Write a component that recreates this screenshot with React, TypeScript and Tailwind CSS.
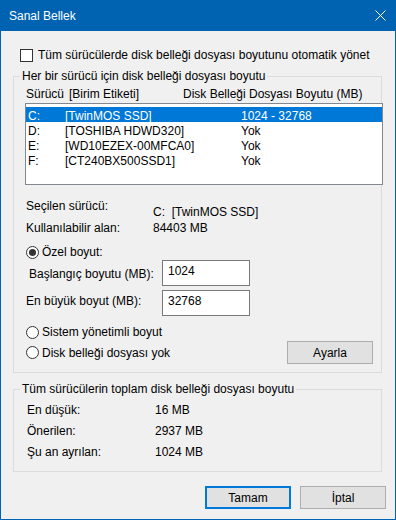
import React from "react";

const font = { fontFamily: '"Liberation Sans", Arial, sans-serif' };

const drives = [
  { d: "C:", label: "[TwinMOS SSD]", size: "1024 - 32768", sel: true },
  { d: "D:", label: "[TOSHIBA HDWD320]", size: "Yok" },
  { d: "E:", label: "[WD10EZEX-00MFCA0]", size: "Yok" },
  { d: "F:", label: "[CT240BX500SSD1]", size: "Yok" },
];

function Radio({ checked, label }: { checked?: boolean; label: string }) {
  return (
    <div className="flex items-center h-[16px] ml-[1px]">
      <span className="w-[13px] h-[13px] rounded-full border border-[#333333] bg-white flex items-center justify-center">
        {checked && <span className="w-[7px] h-[7px] rounded-full bg-[#333333]" />}
      </span>
      <span className="ml-[3px] leading-[16px]">{label}</span>
    </div>
  );
}

function Btn({ children, primary }: { children: React.ReactNode; primary?: boolean }) {
  return (
    <button
      className={
        primary
          ? "w-[86px] h-[23px] bg-[#e1e1e1] border-2 border-[#0078d7] text-[12px] leading-[16px] text-black"
          : "w-[86px] h-[23px] bg-[#e1e1e1] border border-[#adadad] text-[12px] leading-[16px] text-black"
      }
    >
      {children}
    </button>
  );
}

export default function App() {
  return (
    <div
      className="w-[396px] h-[520px] bg-[#0063b1] px-[1px] pb-[1px] flex flex-col text-[12px] text-black"
      style={font}
    >
      {/* Title bar */}
      <div className="h-[31px] flex items-center justify-between text-white">
        <span className="pl-[8px] leading-[16px]">Sanal Bellek</span>
        <svg width="11" height="11" viewBox="0 0 11 11" className="mr-[9px]">
          <path d="M0.5 0.5 L10.5 10.5 M10.5 0.5 L0.5 10.5" stroke="white" strokeWidth="1" />
        </svg>
      </div>

      {/* Body */}
      <div className="flex-1 bg-[#f0f0f0] pt-[16px] flex flex-col">
        <div className="flex items-center h-[16px] ml-[19px]">
          <span className="w-[13px] h-[13px] border border-[#333333] bg-white" />
          <span className="ml-[5px] leading-[16px]">
            Tüm sürücülerde disk belleği dosyası boyutunu otomatik yönet
          </span>
        </div>

        <fieldset className="mt-[5px] ml-[12px] w-[369px] min-w-0 border border-[#dcdcdc] pb-[8px]">
          <legend className="ml-[6px] px-[2px] h-[16px] leading-[16px]">
            Her bir sürücü için disk belleği dosyası boyutu
          </legend>
          <div className="pl-[11px] pt-[2px]">
            <div className="flex h-[16px] leading-[16px] pl-[1px]">
              <span className="w-[43px]">Sürücü</span>
              <span className="w-[114px]">[Birim Etiketi]</span>
              <span>Disk Belleği Dosyası Boyutu (MB)</span>
            </div>
            <div className="mt-[1px] w-[358px] h-[82px] border border-[#828790] bg-white pt-[3px]">
              {drives.map((r) => (
                <div
                  key={r.d}
                  className={
                    r.sel
                      ? "flex h-[15px] leading-[18px] pl-[2px] bg-[#0078d7] text-white"
                      : "flex h-[15px] leading-[18px] pl-[2px]"
                  }
                >
                  <span className="w-[37px]">{r.d}</span>
                  <span className="w-[176px]">{r.label}</span>
                  <span>{r.size}</span>
                </div>
              ))}
            </div>

            <div className="mt-[13px] pl-[1px] flex">
              <span className="w-[127px] leading-[16px]">Seçilen sürücü:</span>
              <span className="mt-[6px] leading-[16px] whitespace-pre">C:  [TwinMOS SSD]</span>
            </div>
            <div className="pl-[1px] flex">
              <span className="w-[127px] leading-[16px]">Kullanılabilir alan:</span>
              <span className="leading-[16px]">84403 MB</span>
            </div>

            <div className="mt-[8px]">
              <Radio checked label="Özel boyut:" />
            </div>
            <div className="flex h-[26px]">
              <span className="ml-[4px] w-[133px] mt-[6px] leading-[16px]">Başlangıç boyutu (MB):</span>
              <div className="w-[88px] h-[26px] border border-[#7a7a7a] bg-white pl-[5px] pt-[2px] leading-[16px]">
                1024
              </div>
            </div>
            <div className="flex h-[26px] mt-[4px]">
              <span className="ml-[1px] w-[136px] mt-[3px] leading-[16px]">En büyük boyut (MB):</span>
              <div className="w-[88px] h-[26px] border border-[#7a7a7a] bg-white pl-[5px] pt-[2px] leading-[16px]">
                32768
              </div>
            </div>

            <div className="mt-[8px]">
              <Radio label="Sistem yönetimli boyut" />
            </div>
            <div className="mt-[1px] h-[23px] flex items-center justify-between mr-[8px]">
              <Radio label="Disk belleği dosyası yok" />
              <Btn>Ayarla</Btn>
            </div>
          </div>
        </fieldset>

        <fieldset className="mt-[8px] ml-[12px] w-[369px] min-w-0 border border-[#dcdcdc] pb-[11px]">
          <legend className="ml-[6px] px-[2px] h-[16px] leading-[16px]">
            Tüm sürücülerin toplam disk belleği dosyası boyutu
          </legend>
          <div className="pl-[13px] pt-[5px] flex flex-col gap-[5px]">
            {[
              ["En düşük:", "16 MB"],
              ["Önerilen:", "2937 MB"],
              ["Şu an ayrılan:", "1024 MB"],
            ].map(([k, v]) => (
              <div key={k} className="flex h-[16px] leading-[16px]">
                <span className="w-[128px]">{k}</span>
                <span>{v}</span>
              </div>
            ))}
          </div>
        </fieldset>

        <div className="mt-[14px] flex justify-end gap-[9px] pr-[9px]">
          <Btn primary>Tamam</Btn>
          <Btn>İptal</Btn>
        </div>
      </div>
    </div>
  );
}
